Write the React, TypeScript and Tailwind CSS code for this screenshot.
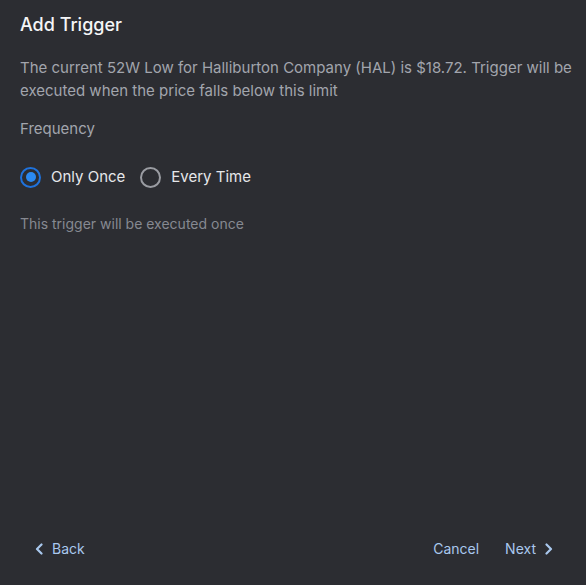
import React, { useState } from 'react'

const Radio: React.FC<{ checked: boolean; label: string; onClick: () => void }> = ({ checked, label, onClick }) => {
  return (
    <button type="button" onClick={onClick} className="flex items-center gap-[10px]">
      {checked ? (
        <span className="w-[21px] h-[21px] rounded-full border-[2.5px] border-[#1f72dc] flex items-center justify-center">
          <span className="w-[10px] h-[10px] rounded-full bg-[#2b8af2]" />
        </span>
      ) : (
        <span className="w-[21px] h-[21px] rounded-full border-2 border-[#9a9ca2]" />
      )}
      <span className="text-[15px] text-[#e6e7ea]">{label}</span>
    </button>
  )
}

export default function App() {
  const [once, setOnce] = useState(true)

  return (
    <div
      className="w-[586px] h-[585px] bg-[#2c2d32] flex flex-col"
      style={{ fontFamily: 'Inter, "Noto Sans", sans-serif' }}
    >
      <div className="flex-grow pl-5 pr-[14px] pt-[12px]">
        <p className="text-[18px] leading-[26px] font-medium text-[#f4f5f7]">Add Trigger</p>
        <p className="mt-[18px] text-[15px] leading-[23px] text-[#a2a5ad]">
          The current 52W Low for Halliburton Company (HAL) is $18.72. Trigger will be executed when the price falls
          below this limit
        </p>
        <p className="mt-[15px] text-[15px] leading-[23px] text-[#a2a5ad]">Frequency</p>
        <div className="mt-[26px] flex items-center gap-[15px]">
          <Radio checked={once} label="Only Once" onClick={() => setOnce(true)} />
          <Radio checked={!once} label="Every Time" onClick={() => setOnce(false)} />
        </div>
        <p className="mt-[24px] text-[14px] leading-[22px] text-[#868991]">
          {once ? 'This trigger will be executed once' : 'This trigger will be executed every time'}
        </p>
      </div>
      <div className="flex items-center justify-between pl-[35px] pr-[33px] pb-[25px] text-[14px] leading-[22px] text-[#a9c8ee]">
        <button type="button" className="flex items-center gap-[8px]">
          <svg width="9" height="12" viewBox="0 0 9 12" fill="none" stroke="currentColor" strokeWidth="2.2" strokeLinecap="round" strokeLinejoin="round">
            <path d="M6.5 1.5 L2 6 L6.5 10.5" />
          </svg>
          Back
        </button>
        <div className="flex items-center gap-[26px]">
          <button type="button">Cancel</button>
          <button type="button" className="flex items-center gap-[8px]">
            Next
            <svg width="9" height="12" viewBox="0 0 9 12" fill="none" stroke="currentColor" strokeWidth="2.2" strokeLinecap="round" strokeLinejoin="round">
              <path d="M2.5 1.5 L7 6 L2.5 10.5" />
            </svg>
          </button>
        </div>
      </div>
    </div>
  )
}
